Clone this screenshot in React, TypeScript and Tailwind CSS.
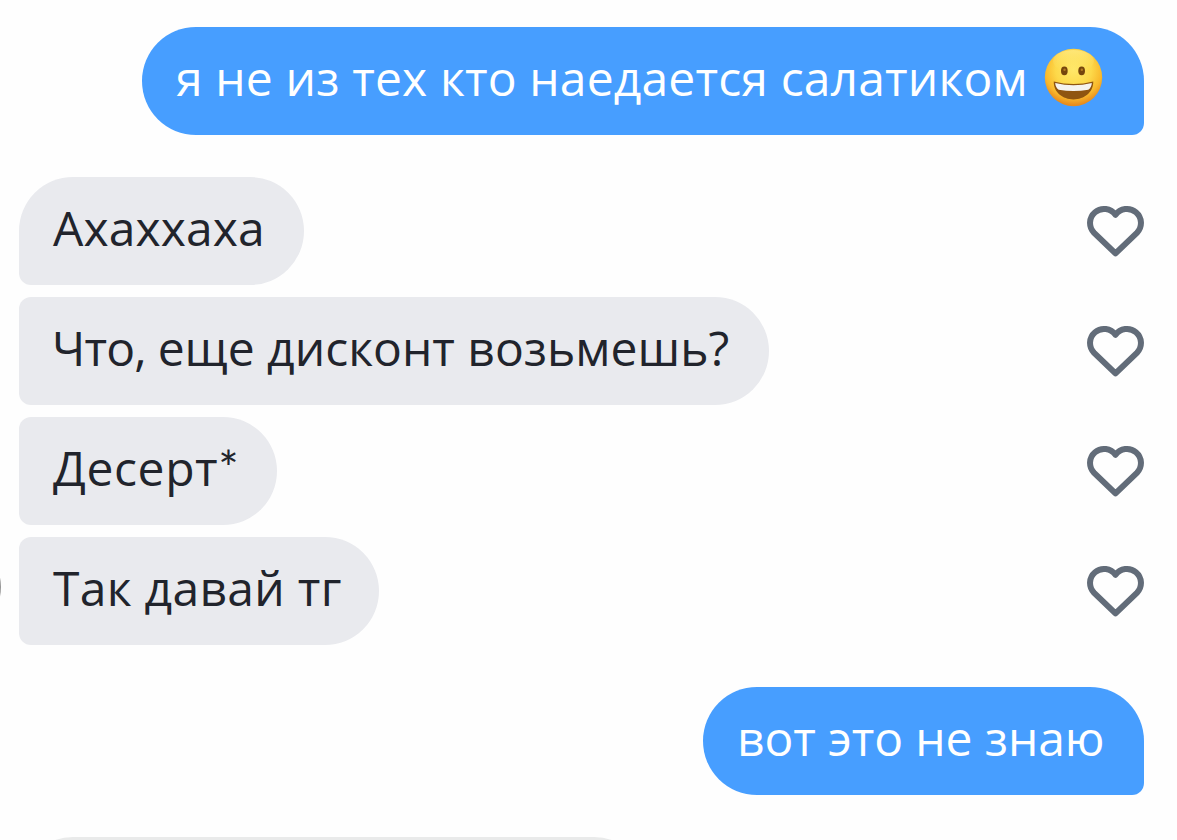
import React from 'react';

interface IncomingMessage {
  id: number;
  text: React.ReactNode;
  bubble: string;
}

const incoming: IncomingMessage[] = [
  { id: 1, text: 'Ахаххаха', bubble: 'w-[285px] rounded-tl-[54px] tracking-[0.1px]' },
  { id: 2, text: <><span className="-ml-px tracking-[-0.8px]">Что, </span>еще дисконт возьмешь?</>, bubble: 'w-[750px] rounded-tl-xl' },
  {
    id: 3,
    text: <>Десерт<span className="font-['Lato']">*</span></>,
    bubble: 'w-[258px] rounded-tl-xl tracking-[0.6px]',
  },
  { id: 4, text: 'Так давай тг', bubble: 'w-[360px] rounded-tl-xl tracking-[0.3px]' },
];

const HeartIcon: React.FC = () => (
  <svg className="h-[52px] w-[57px]" viewBox="0 0 57 52" fill="none">
    <path
      d="M28.5 9.9A14 14 0 1 0 7.1 27.8L28.5 48.3L49.9 27.8A14 14 0 1 0 28.5 9.9Z"
      stroke="#626c79"
      strokeWidth="6"
      strokeLinejoin="round"
    />
  </svg>
);

const GrinningFace: React.FC = () => (
  <svg className="size-[59px] shrink-0 -translate-y-1" viewBox="0 0 58 58" role="img" aria-label="😀">
    <defs>
      <radialGradient id="face" cx="50%" cy="36%" r="62%">
        <stop offset="0" stopColor="#ffe86a" />
        <stop offset="0.5" stopColor="#fdd94a" />
        <stop offset="0.8" stopColor="#f9b92c" />
        <stop offset="1" stopColor="#e88b1c" />
      </radialGradient>
      <linearGradient id="shine" x1="0" y1="0" x2="0" y2="1">
        <stop offset="0" stopColor="#fff6a8" stopOpacity="0.5" />
        <stop offset="1" stopColor="#ffe463" stopOpacity="0" />
      </linearGradient>
    </defs>
    <circle cx="29" cy="29" r="28.2" fill="url(#face)" />
    <ellipse cx="29" cy="13" rx="20" ry="11" fill="url(#shine)" />
    <ellipse cx="20" cy="22.5" rx="3.3" ry="4.2" fill="#75450c" />
    <ellipse cx="37" cy="22.5" rx="3.3" ry="4.2" fill="#75450c" />
    <circle cx="20.2" cy="21.4" r="1.2" fill="#b17a24" />
    <circle cx="37.2" cy="21.4" r="1.2" fill="#b17a24" />
    <path
      d="M9.6 33Q29 38 48.4 33C48.8 43.5 39.5 50.6 29 50.6S9.2 43.5 9.6 33Z"
      fill="#8f5510"
    />
    <path d="M11 34.4Q29 39 47 34.4Q46.8 38.6 43.6 41Q29 43.6 14.4 41Q11.2 38.6 11 34.4Z" fill="#f5f3ef" />
  </svg>
);

const App: React.FC = () => {
  return (
    <main className="relative flex h-[840px] w-[1177px] flex-col overflow-hidden bg-[#fefefe] pl-[19px] pr-[33px] pt-[27px] font-['Open_Sans',sans-serif] text-[48px] leading-[108px] whitespace-nowrap text-[#21242c]">
      <div className="flex h-[108px] w-[1002px] shrink-0 items-center self-end rounded-[54px] rounded-br-xl bg-[#479eff] pl-[34px] text-white">
        <p className="h-[108px] w-[868px] -translate-y-[3px] tracking-[0.15px]">я не из тех кто наедается салатиком</p>
        <GrinningFace />
      </div>

      <section className="mt-[42px] flex flex-col gap-3">
        {incoming.map(message => (
          <div key={message.id} className="flex shrink-0 items-center justify-between">
            <div className={`h-[108px] rounded-r-[54px] rounded-bl-xl bg-[#e9eaee] pl-[34px] ${message.bubble}`}>
              <p className="-translate-y-[3px]">{message.text}</p>
            </div>
            <HeartIcon />
          </div>
        ))}
      </section>

      <div className="mt-[42px] h-[108px] w-[441px] shrink-0 self-end rounded-[54px] rounded-br-xl bg-[#479eff] pl-[34px] text-white">
        <p className="-translate-y-[3px] tracking-[-0.1px]">вот это не знаю</p>
      </div>

      <div className="mt-[42px] h-[108px] w-[629px] shrink-0 rounded-[54px] rounded-bl-xl bg-[#e9eaea]" />

      {/* sender avatar, mostly past the left edge */}
      <div className="absolute top-[542px] -left-[89px] size-[90px] rounded-full bg-[#969696]" />
    </main>
  );
};

export default App;
